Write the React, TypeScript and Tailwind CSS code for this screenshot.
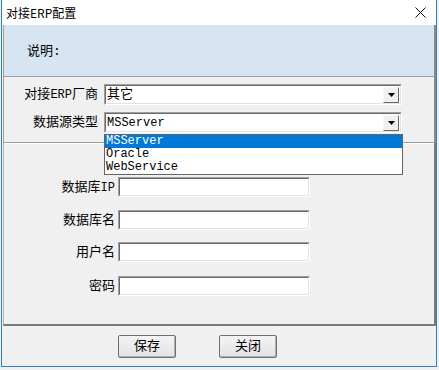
import React from 'react';

const mono = "font-['Liberation_Mono','Noto_Sans_CJK_SC',monospace]";

const Combo: React.FC<{ value: string; latin?: boolean }> = ({ value, latin }) => (
  <div className="w-[298px] h-[21px] border border-t-[#a0a0a0] border-l-[#a0a0a0] border-b-white border-r-white">
    <div className="h-full flex items-center bg-white border border-t-[#696969] border-l-[#696969] border-b-[#e3e3e3] border-r-[#e3e3e3]">
      <span className={`flex-1 pl-[1px] leading-none ${latin ? 'text-[12px]' : 'text-[13px]'}`}>{value}</span>
      <div className="w-[16px] h-[16px] mr-[1px] flex items-center justify-center bg-[#f0f0f0] border border-t-[#f8f8f8] border-l-[#f8f8f8] border-b-[#696969] border-r-[#696969]">
        <svg width="7" height="4" viewBox="0 0 7 4">
          <path d="M0 0h7L3.5 4z" fill="#000" />
        </svg>
      </div>
    </div>
  </div>
);

const Field: React.FC<{ label: React.ReactNode; className?: string }> = ({ label, className }) => (
  <div className={`flex items-center ${className ?? ''}`}>
    <div className="w-[114px] text-right text-[13px] leading-none pr-[3px]">{label}</div>
    <div className="w-[192px] h-[20px] border border-t-[#a0a0a0] border-l-[#a0a0a0] border-b-white border-r-white">
      <div className="h-full bg-white border border-t-[#696969] border-l-[#696969] border-b-[#e3e3e3] border-r-[#e3e3e3]" />
    </div>
  </div>
);

const Btn: React.FC<{ text: string }> = ({ text }) => (
  <button className="w-[58px] h-[23px] rounded-[2px] border border-[#707070] bg-gradient-to-b from-[#f4f4f4] to-[#e2e2e2] text-[13px] leading-none text-black shadow-[inset_-1px_-1px_0_#b0b0b0]">
    {text}
  </button>
);

export default function App() {
  return (
    <div className={`w-[439px] h-[370px] bg-[#f0f0f0] text-black relative overflow-hidden ${mono}`}>
      <div className="ml-[1px] w-[436px] h-[367px] border-x border-b border-[#2b80d6] bg-[#f0f0f0] flex flex-col">
        {/* title bar */}
        <div className="h-[25px] shrink-0 bg-white flex items-center justify-between pl-[4px] pr-[10px]">
          <span className="font-['Noto_Sans_CJK_SC',sans-serif] text-[12px] leading-none">对接ERP配置</span>
          <svg width="11" height="11" viewBox="0 0 11 11">
            <path d="M0.5 0.5l10 10M10.5 0.5l-10 10" stroke="#111" strokeWidth="1" />
          </svg>
        </div>

        {/* upper section */}
        <div className="ml-[1px] w-[433px] h-[117px] shrink-0 border-l border-l-[#a0a0a0] border-r-2 border-r-[#8a8a8a] flex flex-col">
          <div className="h-[52px] bg-[#d7e4f2] border-b border-[#a0a0a0] pl-[23px] pt-[14px]">
            <span className="text-[13px] leading-none">说明:</span>
          </div>
          <div className="flex flex-col gap-[7px] pt-[7px]">
            <div className="flex items-center">
              <div className="w-[100px] text-right text-[13px] leading-none pr-[6px]">
                对接<span className="text-[12px]">ERP</span>厂商
              </div>
              <Combo value="其它" />
            </div>
            <div className="flex items-center">
              <div className="w-[100px] text-right text-[13px] leading-none pr-[6px]">数据源类型</div>
              <Combo value="MSServer" latin />
            </div>
          </div>
        </div>

        {/* lower panel */}
        <div className="ml-[1px] w-[433px] h-[184px] shrink-0 border-t border-t-[#a0a0a0] border-l border-l-[#b4b4b4] border-r-2 border-r-[#7a7a7a] border-b-2 border-b-[#7a7a7a] flex flex-col">
          <div className="border-t border-white h-[34px] shrink-0" />
          <Field label={<>数据库<span className="text-[12px]">IP</span></>} />
          <Field label="数据库名" className="mt-[13px]" />
          <Field label="用户名" className="mt-[12px]" />
          <Field label="密码" className="mt-[14px]" />
        </div>

        {/* buttons */}
        <div className="flex-1 flex items-start pt-[9px] pl-[116px] gap-[43px]">
          <Btn text="保存" />
          <Btn text="关闭" />
        </div>
      </div>

      {/* open dropdown list */}
      <div className="absolute left-[104px] top-[134px] w-[299px] h-[41px] bg-white border border-[#646464] flex flex-col text-[12px] leading-[13px]">
        <div className="h-[13px] bg-[#0078d7] text-white pl-[1px]">MSServer</div>
        <div className="h-[13px] pl-[1px]">Oracle</div>
        <div className="h-[13px] pl-[1px]">WebService</div>
      </div>
    </div>
  );
}
